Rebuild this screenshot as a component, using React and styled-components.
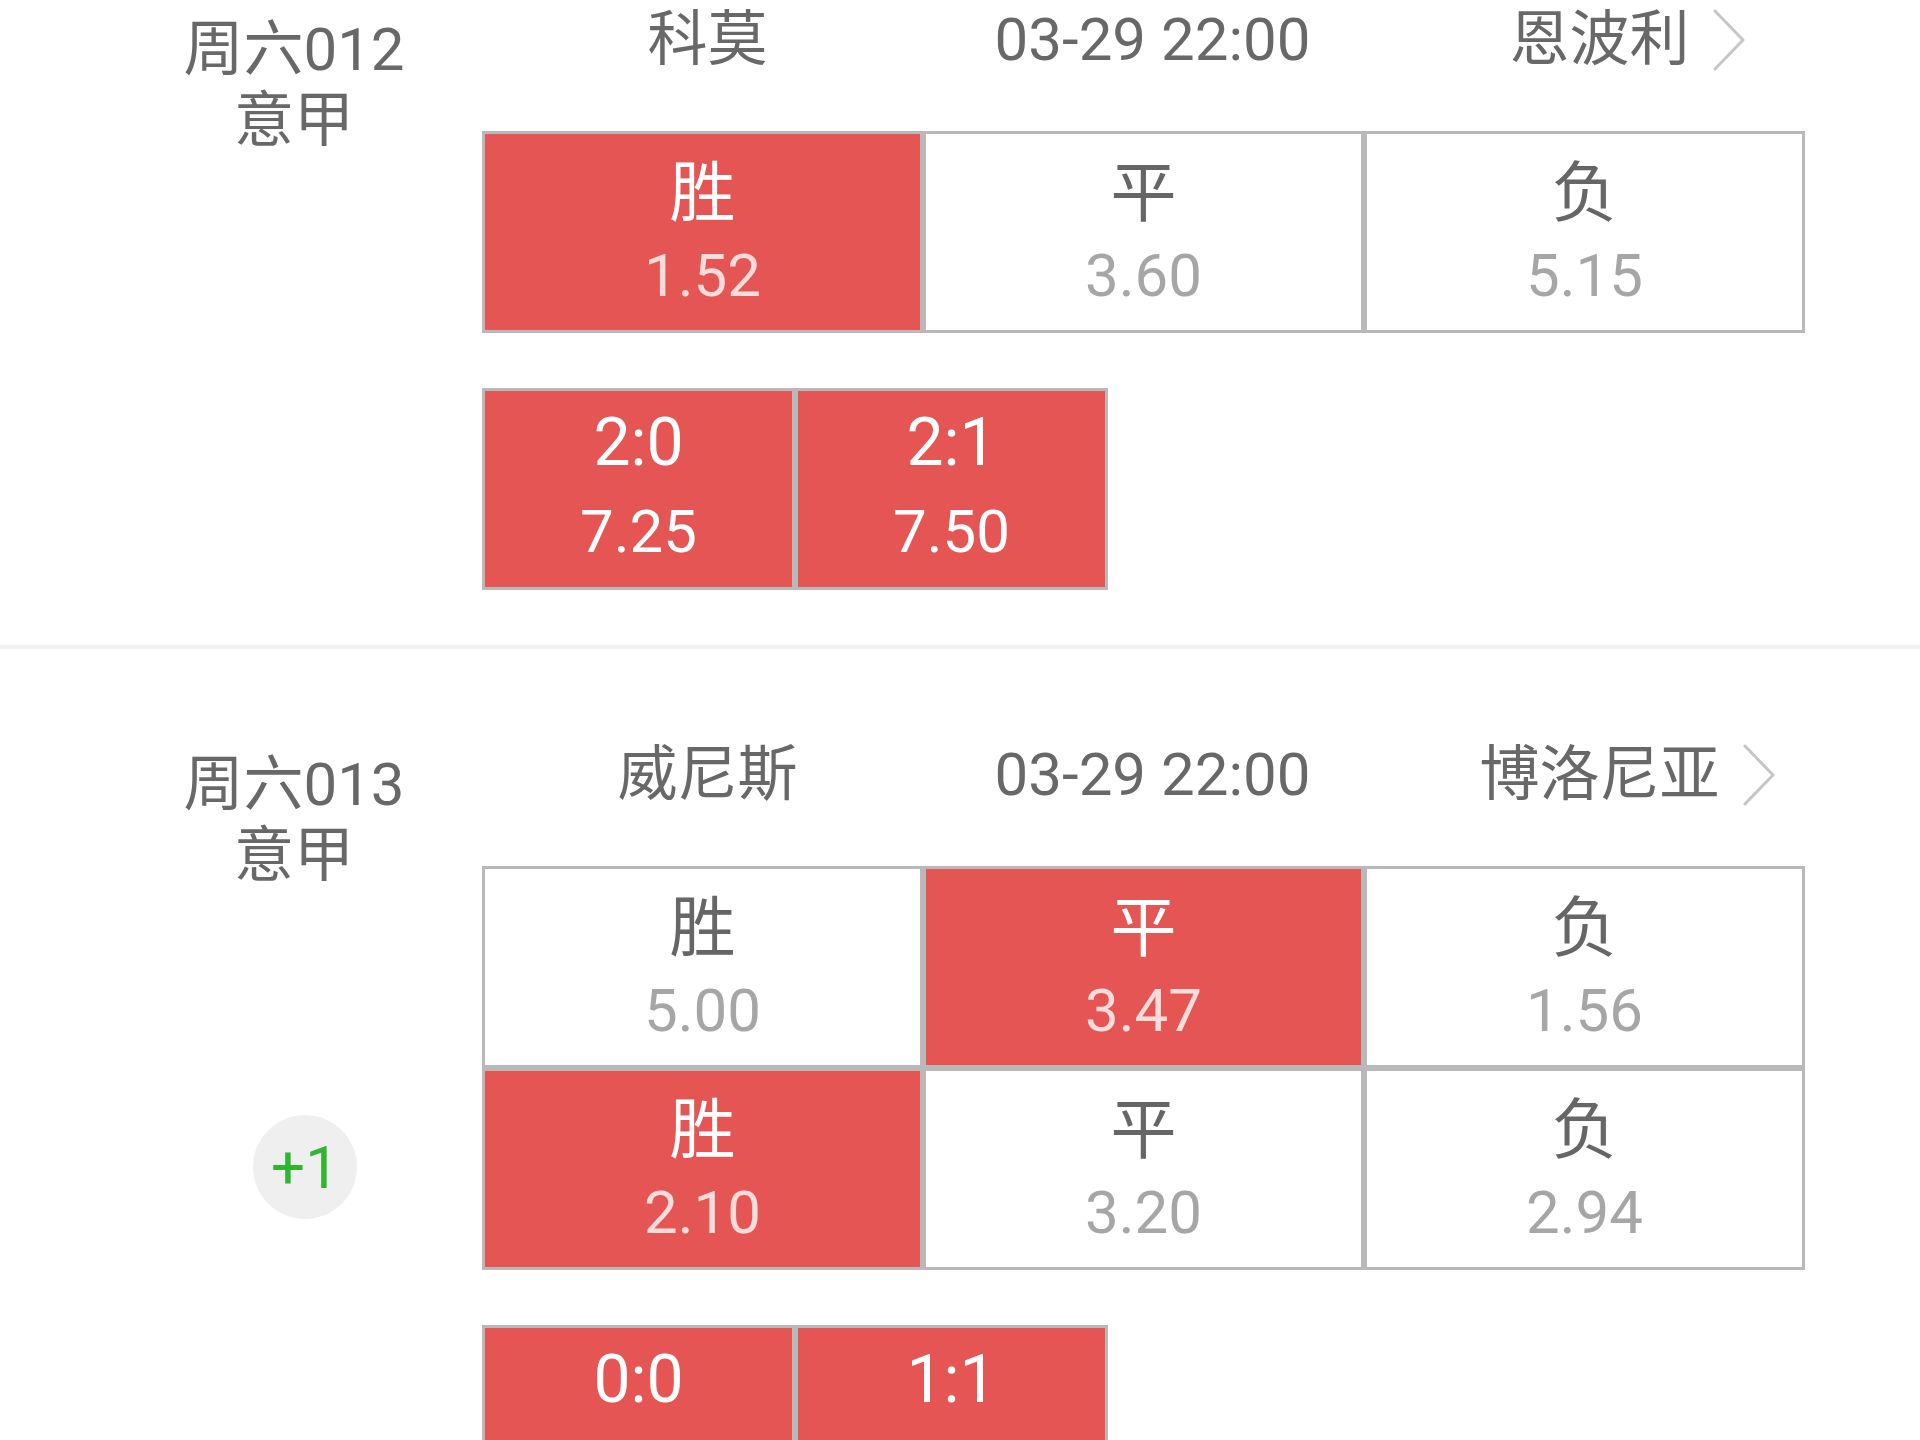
import React from "react";
import styled, { createGlobalStyle } from "styled-components";

const GlobalStyle = createGlobalStyle`
  html, body {
    margin: 0;
    padding: 0;
    background: #ffffff;
  }
  body {
    font-family: Roboto, "Noto Sans CJK SC", "Noto Sans", sans-serif;
    color: #666666;
  }
`;

const RED = "#e55553";
const LINE = "#b9b9b9";

const matches = [
  {
    code: "周六012",
    league: "意甲",
    home: "科莫",
    time: "03-29 22:00",
    away: "恩波利",
    rows: [
      [
        { label: "胜", odds: "1.52", on: true },
        { label: "平", odds: "3.60" },
        { label: "负", odds: "5.15" },
      ],
    ],
    scores: [
      { label: "2:0", odds: "7.25", on: true },
      { label: "2:1", odds: "7.50", on: true },
    ],
  },
  {
    code: "周六013",
    league: "意甲",
    home: "威尼斯",
    time: "03-29 22:00",
    away: "博洛尼亚",
    handicap: "+1",
    rows: [
      [
        { label: "胜", odds: "5.00" },
        { label: "平", odds: "3.47", on: true },
        { label: "负", odds: "1.56" },
      ],
      [
        { label: "胜", odds: "2.10", on: true },
        { label: "平", odds: "3.20" },
        { label: "负", odds: "2.94" },
      ],
    ],
    scores: [
      { label: "0:0", odds: "9.00", on: true },
      { label: "1:1", odds: "6.50", on: true },
    ],
  },
];

const Page = styled.div`
  width: 1920px;
  overflow: hidden;
`;

const Section = styled.section`
  display: flex;
  padding: ${({ $first }) => ($first ? 0 : 86)}px 0 55px 98px;
  border-bottom: 4px solid #f0f0f0;
`;

const Side = styled.div`
  box-sizing: border-box;
  width: 384px;
  flex-shrink: 0;
  display: flex;
  flex-direction: column;
  align-items: center;
  padding: 14px 0 0 8px;
`;

const MatchLabel = styled.div`
  font-size: 60px;
  line-height: 71px;
  text-align: center;
  color: #686868;
`;

const Handicap = styled.div`
  width: 104px;
  height: 104px;
  margin-top: 224px;
  margin-left: 22px;
  border-radius: 50%;
  background: #efefef;
  color: #2fb52f;
  font-size: 60px;
  display: flex;
  align-items: center;
  justify-content: center;
`;

const Main = styled.div`
  width: 1323px;
  display: flex;
  flex-direction: column;
`;

const Header = styled.div`
  display: grid;
  grid-template-columns: repeat(3, 441px);
  height: 80px;
  align-items: center;
  font-size: 60px;
  line-height: 80px;
  color: #686868;
  white-space: nowrap;
`;

const HeaderCell = styled.div`
  display: flex;
  align-items: center;
  justify-content: center;
  gap: 22px;
  padding-left: ${({ $shift }) => $shift}px;
`;

const Chevron = styled.svg`
  width: 34px;
  height: 62px;
  flex-shrink: 0;
`;

const Table = styled.div`
  display: flex;
  flex-direction: column;
  margin-top: ${({ $gap }) => $gap}px;
`;

const Row = styled.div`
  display: flex;
`;

const Cell = styled.div`
  box-sizing: border-box;
  width: ${({ $w }) => $w}px;
  height: 202px;
  border: 3px solid ${LINE};
  background: ${({ $on }) => ($on ? RED : "#ffffff")};
  display: flex;
  flex-direction: column;
  align-items: center;
  padding-top: ${({ $pad }) => $pad}px;
`;

const CellLabel = styled.div`
  font-size: 66px;
  line-height: 80px;
  color: ${({ $on }) => ($on ? "#ffffff" : "#666666")};
`;

const CellOdds = styled.div`
  font-size: 60px;
  line-height: 80px;
  margin-top: ${({ $gap }) => $gap}px;
  color: ${({ $on, $tone }) => ($on ? $tone : "#a6a6a6")};
`;

const ArrowRight = () => (
  <Chevron viewBox="0 0 34 62">
    <polyline
      points="3,2 31,31 3,60"
      fill="none"
      stroke="#c6c6c6"
      strokeWidth="3"
      strokeLinecap="round"
      strokeLinejoin="round"
    />
  </Chevron>
);

const Match = ({ match, first }) => (
  <Section $first={first}>
    <Side>
      <MatchLabel>
        {match.code}
        <br />
        {match.league}
      </MatchLabel>
      {match.handicap && <Handicap>{match.handicap}</Handicap>}
    </Side>
    <Main>
      <Header>
        <HeaderCell $shift={10}>{match.home}</HeaderCell>
        <HeaderCell $shift={18}>{match.time}</HeaderCell>
        <HeaderCell $shift={86}>
          <span>{match.away}</span>
          <ArrowRight />
        </HeaderCell>
      </Header>
      <Table $gap={51}>
        {match.rows.map((row, i) => (
          <Row key={i}>
            {row.map((c) => (
              <Cell key={c.label} $w={441} $on={c.on} $pad={20}>
                <CellLabel $on={c.on}>{c.label}</CellLabel>
                <CellOdds $on={c.on} $gap={2} $tone="#fbdcdb">
                  {c.odds}
                </CellOdds>
              </Cell>
            ))}
          </Row>
        ))}
      </Table>
      <Table $gap={55}>
        <Row>
          {match.scores.map((s) => (
            <Cell key={s.label} $w={313} $on={s.on} $pad={12}>
              <CellLabel $on={s.on}>{s.label}</CellLabel>
              <CellOdds $on={s.on} $gap={9} $tone="#ffffff">
                {s.odds}
              </CellOdds>
            </Cell>
          ))}
        </Row>
      </Table>
    </Main>
  </Section>
);

export default function App() {
  return (
    <Page>
      <GlobalStyle />
      {matches.map((m, i) => (
        <Match key={m.code} match={m} first={i === 0} />
      ))}
    </Page>
  );
}
